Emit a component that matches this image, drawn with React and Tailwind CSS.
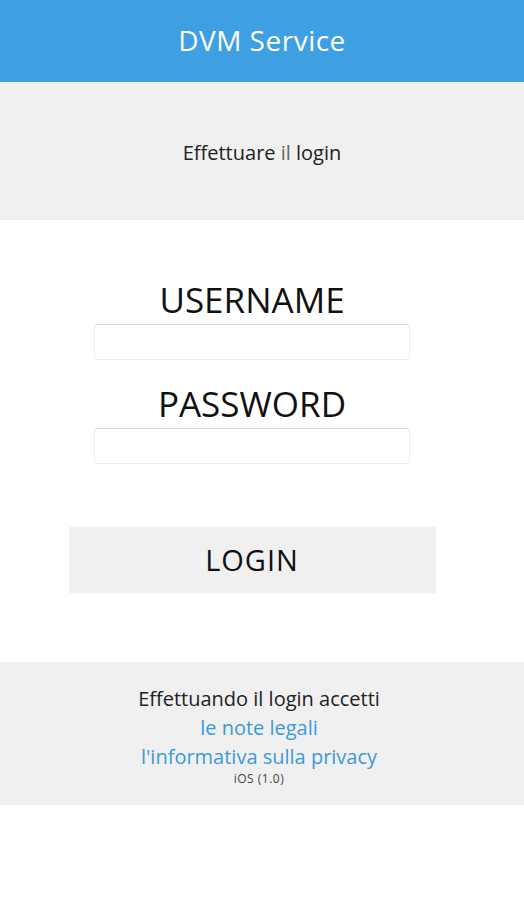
export default function App() {
  return (
    <div className="min-h-[900px] bg-white font-['Open_Sans',sans-serif] text-[#1a1a1a]">
      {/* Header */}
      <header className="flex h-[82px] items-center justify-center bg-[#3ea0e2] pb-[3px]">
        <h1 className="text-[28px] tracking-[0.5px] text-white">DVM Service</h1>
      </header>

      {/* Intro band */}
      <div className="flex h-[138px] items-center justify-center bg-[#f0f0f0] pt-[4px]">
        <p className="text-[20px] text-[#222]">
          Effettuare <span className="text-[#666]">il</span> login
        </p>
      </div>

      {/* Form */}
      <div className="flex flex-col items-center pr-[20px] pt-[60px]">
        <label className="text-[35px] leading-[40px] text-[#111]">USERNAME</label>
        <input
          type="text"
          className="mt-[4px] h-[36px] w-[316px] rounded-[3px] border border-[#ececec] border-t-[#d8d8d8] bg-white outline-none"
        />
        <label className="mt-[24px] text-[35px] leading-[40px] text-[#111]">PASSWORD</label>
        <input
          type="password"
          className="mt-[4px] h-[36px] w-[316px] rounded-[3px] border border-[#ececec] border-t-[#d8d8d8] bg-white outline-none"
        />
        <button
          type="button"
          className="mt-[63px] flex h-[66px] w-[367px] items-center justify-center bg-[#f0f0f0] text-[29px] tracking-[1px] text-[#111]"
        >
          LOGIN
        </button>
      </div>

      {/* Footer */}
      <footer className="mt-[69px] flex h-[143px] flex-col items-center justify-center bg-[#f0f0f0] pr-[6px] pt-[4px]">
        <p className="text-[20px] leading-[29px] text-[#222]">Effettuando il login accetti</p>
        <a className="text-[20px] leading-[29px] text-[#3a9ad9]">le note legali</a>
        <a className="text-[20px] leading-[29px] text-[#3a9ad9]">l'informativa sulla privacy</a>
        <p className="text-[12px] leading-[16px] tracking-[0.5px] text-[#444]">iOS (1.0)</p>
      </footer>
    </div>
  );
}
